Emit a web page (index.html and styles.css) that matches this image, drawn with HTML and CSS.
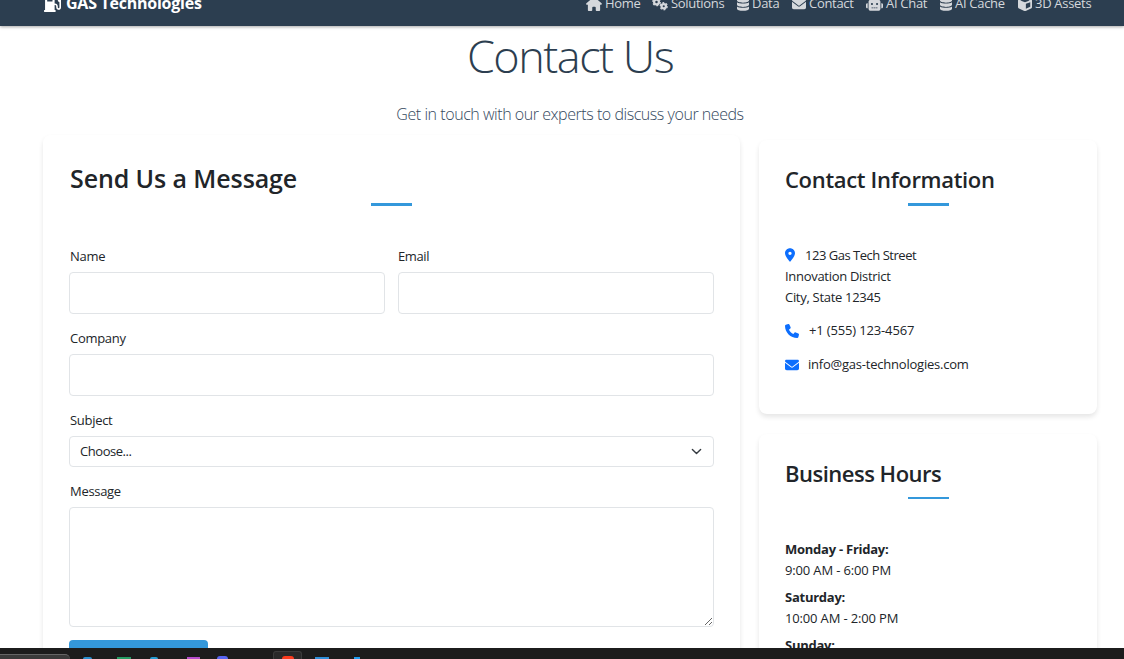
FILE: index.html
```html
<!DOCTYPE html>
<html lang="en">
<head>
<meta charset="utf-8">
<title>Contact Us - GAS Technologies</title>
<link rel="stylesheet" href="styles.css">
</head>
<body>
<svg class="defs" width="0" height="0">
  <symbol id="pump" viewBox="0 0 512 512"><path d="M336 448H16c-8.800 0-16 7.200-16 16v32c0 8.800 7.200 16 16 16h320c8.800 0 16-7.200 16-16v-32c0-8.800-7.200-16-16-16zm157.200-340.700l-81-81c-6.200-6.200-16.400-6.200-22.600 0l-11.300 11.300c-6.200 6.200-6.200 16.400 0 22.600L416 97.900V160c0 28.100 20.900 51.300 48 55.200V376c0 13.200-10.800 24-24 24s-24-10.800-24-24v-32c0-48.600-39.400-88-88-88h-8V64c0-35.300-28.700-64-64-64H96C60.700 0 32 28.700 32 64v384h288V304h8c22.100 0 40 17.900 40 40v27.800c0 37.700 27 72 64.500 75.900 43 4.300 79.500-29.500 79.500-71.700V152.600c0-17-6.800-33.300-18.800-45.300zM256 192H96V64h160v128z"/></symbol>
  <symbol id="home" viewBox="0 0 576 512"><path d="M575.800 255.500c0 18-15 32.100-32 32.100h-32l.7 160.200V472c0 22.100-17.900 40-40 40H392c-22.100 0-40-17.900-40-40V384c0-17.700-14.300-32-32-32H256c-17.700 0-32 14.300-32 32v88c0 22.100-17.900 40-40 40H104c-22.100 0-40-17.900-40-40V287.600H32c-18 0-32-14-32-32.100c0-9 3-17 10-24L266.400 8c7-7 15-8 22-8s15 2 21 7L564.800 231.500c8 7 12 15 11 24z"/></symbol>
  <symbol id="cogs" viewBox="0 0 640 512"><g fill="none" stroke="currentColor"><circle cx="180" cy="175" r="95" stroke-width="90"/><circle cx="180" cy="175" r="150" stroke-width="50" stroke-dasharray="79 78"/><circle cx="470" cy="345" r="88" stroke-width="90"/><circle cx="470" cy="345" r="142" stroke-width="48" stroke-dasharray="75 73.700"/></g></symbol>
  <symbol id="db" viewBox="0 0 448 512"><path d="M448 80v48c0 44-100 80-224 80S0 172 0 128V80C0 36 100 0 224 0s224 36 224 80zM0 186c48 40 135 54 224 54s176-14 224-54v102c0 44-100 80-224 80S0 332 0 288zM0 346c48 40 135 54 224 54s176-14 224-54v86c0 44-100 80-224 80S0 476 0 432z"/></symbol>
  <symbol id="mail" viewBox="0 0 512 512"><path d="M48 64C21.500 64 0 85.500 0 112c0 15.100 7.100 29.300 19.200 38.400L236.800 313.600c11.400 8.500 27 8.500 38.400 0L492.800 150.400c12.100-9.100 19.200-23.300 19.200-38.400c0-26.500-21.500-48-48-48H48zM0 176V384c0 35.300 28.700 64 64 64H448c35.300 0 64-28.700 64-64V176L294.400 339.200c-22.800 17.100-54 17.100-76.800 0L0 176z"/></symbol>
  <symbol id="robot" viewBox="0 0 640 512"><path fill-rule="evenodd" d="M288 0h64v96h112c44 0 80 36 80 80v256c0 44-36 80-80 80H176c-44 0-80-36-80-80V176c0-44 36-80 80-80h112zM208 384v32h64v-32zm80 0v32h64v-32zm80 0v32h64v-32zM224 216a40 40 0 1 0 0 80 40 40 0 1 0 0-80zm192 0a40 40 0 1 0 0 80 40 40 0 1 0 0-80zM48 224h16v192H48c-26 0-48-22-48-48v-96c0-26 22-48 48-48zm528 0h16c26 0 48 22 48 48v96c0 26-22 48-48 48h-16z"/></symbol>
  <symbol id="cube" viewBox="0 0 512 512"><path fill-rule="evenodd" d="M234 6q22-8 44 0l192 70q42 16 42 60v227q0 39-36 58L300 507q-44 12-88 0L36 421Q0 402 0 363V136q0-44 42-60zM256 66L82 130l174 64 174-64zM288 434l160-79V192l-160 59z"/></symbol>
  <symbol id="pin" viewBox="0 0 384 512"><path d="M215.700 499.200C267 435 384 279.400 384 192C384 86 298 0 192 0S0 86 0 192c0 87.400 117 243 168.300 307.200c12.300 15.300 35.100 15.300 47.400 0zM192 128a64 64 0 1 1 0 128 64 64 0 1 1 0-128z"/></symbol>
  <symbol id="phone" viewBox="0 0 512 512"><path d="M164.900 24.600c-7.700-18.600-28-28.500-47.400-23.200l-88 24C12.100 30.200 0 46 0 64C0 311.400 200.600 512 448 512c18 0 33.800-12.100 38.600-29.500l24-88c5.300-19.400-4.600-39.700-23.200-47.400l-96-40c-16.300-6.800-35.200-2.100-46.300 11.600L304.700 368C234.300 334.700 177.300 277.700 144 207.300L193.300 167c13.700-11.200 18.400-30 11.600-46.300l-40-96z"/></symbol>
</svg>

<header class="navbar">
  <div class="brand"><svg class="brand-icon"><use href="#pump"/></svg><span>GAS Technologies</span></div>
  <nav class="nav">
    <a class="nav-home"><svg class="wide"><use href="#home"/></svg>Home</a>
    <a class="nav-solutions"><svg class="wide"><use href="#cogs"/></svg>Solutions</a>
    <a class="nav-data"><svg class="narrow"><use href="#db"/></svg>Data</a>
    <a class="nav-contact"><svg class="square"><use href="#mail"/></svg>Contact</a>
    <a class="nav-chat"><svg class="robot"><use href="#robot"/></svg>AI Chat</a>
    <a class="nav-cache"><svg class="narrow"><use href="#db"/></svg>AI Cache</a>
    <a class="nav-assets"><svg class="square"><use href="#cube"/></svg>3D Assets</a>
  </nav>
</header>

<main class="page">
  <h1>Contact Us</h1>
  <p class="lead">Get in touch with our experts to discuss your needs</p>
  <div class="columns">
    <section class="card form-card">
      <h2>Send Us a Message</h2>
      <div class="rule"></div>
      <form>
        <div class="pair">
          <div class="field"><label>Name</label><input type="text"></div>
          <div class="field"><label class="email">Email</label><input type="text"></div>
        </div>
        <div class="field"><label>Company</label><input type="text"></div>
        <div class="field"><label>Subject</label>
          <div class="select"><span>Choose...</span><svg viewBox="0 0 16 16"><path d="m2 5 6 6 6-6"/></svg></div>
        </div>
        <div class="field message"><label>Message</label><textarea></textarea></div>
        <button type="button"></button>
      </form>
    </section>
    <aside>
      <section class="card info-card">
        <h3>Contact Information</h3>
        <div class="rule"></div>
        <p class="address"><svg class="pin"><use href="#pin"/></svg><span class="street">123 Gas Tech Street</span><br>Innovation District<br>City, State 12345</p>
        <p class="phone"><svg><use href="#phone"/></svg>+1 (555) 123-4567</p>
        <p class="mail"><svg><use href="#mail"/></svg>info@gas-technologies.com</p>
      </section>
      <section class="card hours-card">
        <h3 class="hours-title">Business Hours</h3>
        <div class="rule"></div>
        <p class="hours"><strong>Monday - Friday:</strong><br>9:00 AM - 6:00 PM</p>
        <p class="hours"><strong>Saturday:</strong><br>10:00 AM - 2:00 PM</p>
        <p class="hours"><strong>Sunday:</strong></p>
      </section>
    </aside>
  </div>
</main>

<footer class="taskbar">
  <div class="search"></div>
  <i class="app edge"></i><i class="app sheet"></i><i class="app code"></i><i class="app studio"></i><i class="app teams"></i>
  <div class="active"><i class="app red"></i></div>
  <i class="app store"></i><i class="app vs"></i>
</footer>
</body>
</html>
```

FILE: styles.css
```css
* { box-sizing: border-box; }
body {
  margin: 0;
  height: 659px;
  overflow: hidden;
  display: flex;
  flex-direction: column;
  background: #fff;
  color: #212529;
  font: 13px/21px "Open Sans", "Noto Sans", sans-serif;
  letter-spacing: -0.3px;
}
h1, h2, h3, p { margin: 0; }
svg { fill: currentColor; flex: none; }
.defs { display: none; }

.navbar {
  position: relative;
  z-index: 1;
  flex: none;
  height: 26px;
  padding: 0 33px 12px 44px;
  display: flex;
  justify-content: space-between;
  align-items: flex-end;
  background: #2c3e50;
  box-shadow: 0 1px 3px rgba(0, 0, 0, .35);
  color: #fff;
}
.brand { display: flex; align-items: center; height: 21px; font-size: 16px; font-weight: 700; letter-spacing: -0.25px; }
.brand-icon { width: 17px; height: 17px; margin-right: 5px; }
.nav { display: flex; gap: 13px; color: #d5d8dc; }
.nav a { display: flex; align-items: center; gap: 3px; height: 21px; white-space: nowrap; }
.nav .wide { width: 16px; height: 14px; }
.nav .robot { width: 17px; height: 14px; }
.nav .narrow { width: 12px; height: 14px; }
.nav .square { width: 14px; height: 14px; }
.nav-home { width: 53px; }
.nav-solutions { width: 72px; }
.nav-data { width: 42px; }
.nav-contact { width: 61px; }
.nav-chat { width: 61px; }
.nav-cache { width: 65px; }
.nav-assets { width: 73px; }

.page {
  flex: 1;
  min-height: 0;
  overflow: hidden;
  padding: 1px 27px 0 43px;
}
h1 { height: 58px; font-size: 45px; line-height: 58px; font-weight: 300; text-align: center; color: #2c3e50; letter-spacing: -1.500px; }
.lead { height: 23px; margin-top: 18px; font-size: 16px; line-height: 23px; font-weight: 300; text-align: center; color: #34495e; letter-spacing: -0.450px; }
.columns { display: grid; grid-template-columns: 697px 338px; gap: 19px; margin-top: 9px; }
.card { border-radius: 8px; background: #fff; box-shadow: 0 3px 5px rgba(0, 0, 0, .1); }
.rule { width: 41px; height: 3px; margin: 0 auto; background: #3498db; }
h2, h3 { font-weight: 600; line-height: 32px; }

.form-card { height: 560px; padding: 27px 26px 0; }
h2 { padding-left: 1px; font-size: 25px; letter-spacing: -0.100px; }
.form-card .rule { margin-top: 9px; }
form { padding-top: 40px; }
.pair { display: grid; grid-template-columns: 1fr 1fr; gap: 13px; }
.field { margin-bottom: 14px; }
.field.message { margin-bottom: 13px; }
label { display: block; height: 20px; line-height: 20px; margin-bottom: 6px; padding-left: 1px; }
.email { padding-left: 0; letter-spacing: -0.400px; }
input, textarea, .select { display: block; width: 100%; height: 42px; border: 1px solid #e1e4e7; border-radius: 4px; background: #fff; }
.select { height: 31px; display: flex; justify-content: space-between; align-items: center; padding: 0 11px 0 10px; }
.select span { letter-spacing: -0.450px; }
.select svg { width: 11px; height: 11px; fill: none; stroke: #343a40; stroke-width: 2; stroke-linecap: round; stroke-linejoin: round; }
textarea { height: 120px; resize: vertical; }
button { display: block; width: 139px; height: 38px; border: 0; border-radius: 4px; background: #3498db; }

aside { padding-top: 5px; }
h3 { font-size: 22px; letter-spacing: -0.320px; }
.hours-title { letter-spacing: -0.500px; }
.info-card { height: 274px; padding: 23px 26px 0; }
.info-card .rule { margin-top: 8px; }
.hours-card { height: 280px; margin-top: 20px; padding: 23px 26px 0; }
.hours-card .rule { margin-top: 8px; height: 2px; }
.address { padding-top: 39px; margin-bottom: 12px; }
.street { letter-spacing: -0.480px; }
.info-card svg { color: #0d6efd; }
.pin { width: 10px; height: 14px; margin-right: 10px; vertical-align: -2px; }
.phone, .mail { display: flex; align-items: center; margin-bottom: 13px; }
.phone { letter-spacing: -0.150px; }
.mail { letter-spacing: -0.220px; }
.phone svg, .mail svg { width: 14px; height: 14px; margin-right: 9px; }
.phone svg { margin-right: 10px; }
.hours { margin-bottom: 6px; letter-spacing: -0.150px; }
.hours strong { letter-spacing: -0.250px; }
.hours-card .rule + .hours { padding-top: 40px; }

.taskbar { position: relative; z-index: 1; flex: none; height: 11px; display: flex; align-items: flex-end; overflow: hidden; background: #1c1c1c; }
.search { width: 70px; height: 5px; border-top: 1px solid #666; border-radius: 0 6px 0 0; background: #3b3b3b; margin-right: 13px; }
.app { height: 2px; flex: none; }
.edge { width: 9px; background: #298fd0; border-radius: 5px 5px 0 0; margin-right: 25px; }
.sheet { width: 14px; background: #259b63; margin-right: 19px; }
.code { width: 8px; background: #249bd1; border-radius: 5px 5px 0 0; margin-right: 29px; }
.studio { width: 13px; background: #b64ccc; margin-right: 17px; }
.teams { width: 11px; height: 3px; background: #5865f2; border-radius: 6px 6px 0 0; margin-right: 45px; }
.active { width: 29px; height: 8px; display: flex; align-items: flex-end; justify-content: center; border: 1px solid #3b3b3b; border-bottom: 0; border-radius: 3px 3px 0 0; background: #292929; margin-right: 13px; }
.red { width: 12px; height: 3px; background: #fb3b1e; border-radius: 6px 6px 0 0; }
.store { width: 14px; background: #2f8ed8; margin-right: 25px; }
.vs { width: 6px; background: #1f9cf0; }
```
